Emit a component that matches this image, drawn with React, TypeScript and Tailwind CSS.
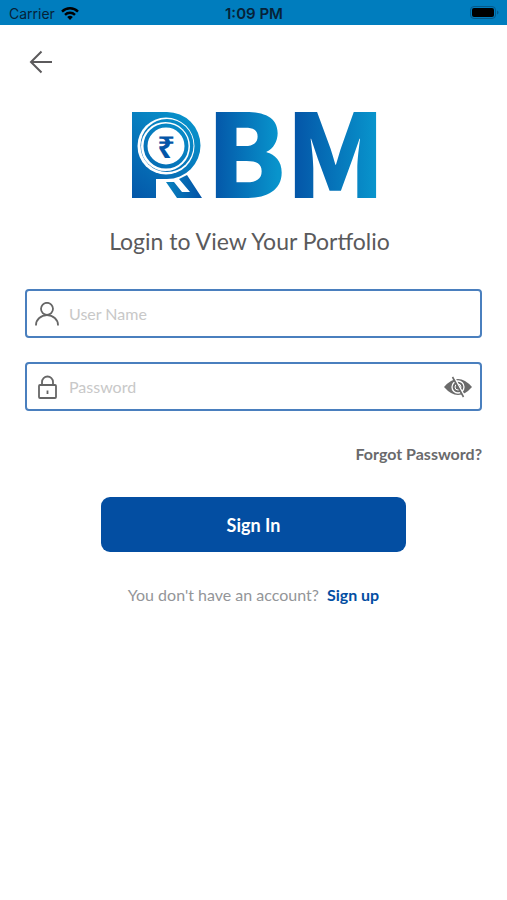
function StatusBar() {
  return (
    <header className="grid h-[25px] grid-cols-3 items-center bg-[#007dbe] pr-2 pl-[9px] font-['Inter','Liberation_Sans',sans-serif] text-[14px] leading-5 text-[#062238]">
      <div className="flex items-center gap-[6px] pt-[2px]">
        <span>Carrier</span>
        <svg viewBox="0 0 18 13" className="h-[13px] w-[18px]" fill="none" stroke="#000" strokeWidth="2.4" aria-hidden="true">
          <path d="M1 4.6a11.3 11.3 0 0 1 16 0" />
          <path d="M4 7.8a7.1 7.1 0 0 1 10 0" />
          <path d="M9 13 6.2 10.1a4 4 0 0 1 5.6 0z" fill="#000" stroke="none" />
        </svg>
      </div>
      <span className="pt-[2px] text-center text-[15px] font-semibold">1:09 PM</span>
      <svg viewBox="0 0 29 13" className="h-[13px] w-[29px] justify-self-end" aria-hidden="true">
        <rect x="0.5" y="0.5" width="25" height="12" rx="3.5" fill="none" stroke="#04598a" />
        <rect x="2" y="2" width="22" height="9" rx="2" fill="#000" />
        <path d="M27 4.5v4q1.5-.5 1.5-2t-1.5-2z" fill="#04598a" />
      </svg>
    </header>
  );
}

function Logo() {
  return (
    <svg viewBox="0 0 246 88" className="h-[88px] w-[246px] overflow-visible" role="img" aria-label="RBM">
      <defs>
        <linearGradient id="mark" x1="0" y1="88" x2="60" y2="10" gradientUnits="userSpaceOnUse">
          <stop offset="0" stopColor="#0456a8" />
          <stop offset="1" stopColor="#0891ca" />
        </linearGradient>
        <linearGradient id="leg" x1="36" y1="0" x2="68" y2="0" gradientUnits="userSpaceOnUse">
          <stop offset="0" stopColor="#0880be" />
          <stop offset="1" stopColor="#0456a8" />
        </linearGradient>
        <linearGradient id="letter" x1="0" y1="0" x2="1" y2="0">
          <stop offset="0.1" stopColor="#0456a8" />
          <stop offset="0.9" stopColor="#0894cc" />
        </linearGradient>
      </defs>
      <path d="M1 1h35a33 33 0 0 1 0 67H25v19H1z" fill="url(#mark)" />
      <circle cx="35" cy="35" r="28.5" fill="#fff" />
      <circle cx="36" cy="34.5" r="26.5" fill="url(#mark)" />
      <circle cx="34.5" cy="35.5" r="24.5" fill="#fff" />
      <circle cx="35" cy="35" r="20.5" fill="none" stroke="url(#mark)" strokeWidth="4" />
      <path d="M35 71h8l8 10h8L48 68l8-4 15 23H46z" fill="url(#leg)" />
      <text x="35" y="47" textAnchor="middle" fontSize="31" fill="#0456a8" className="font-['Noto_Sans',sans-serif] font-bold">₹</text>
      <g fill="url(#letter)" fontSize="115" className="font-['Noto_Sans_CJK_SC',sans-serif] font-black">
        <text x="75" y="87">B</text>
        <text x="154" y="87">M</text>
      </g>
    </svg>
  );
}

function UserIcon() {
  return (
    <svg viewBox="0 0 24 24" className="size-6 shrink-0" fill="none" stroke="#666" strokeWidth="1.8" aria-hidden="true">
      <circle cx="12" cy="6.8" r="6" />
      <path d="M1 23.5v-.5c0-5.5 5-9.8 11-9.8s11 4.3 11 9.8v.5" />
    </svg>
  );
}

function LockIcon() {
  return (
    <svg viewBox="0 0 24 24" className="size-6 shrink-0" fill="none" stroke="#666" strokeWidth="1.8" aria-hidden="true">
      <rect x="4" y="10" width="17" height="13" rx="1" />
      <path d="M7 10V7a5.5 5.5 0 0 1 11 0v3M12.5 15.5v3.5" />
    </svg>
  );
}

function EyeOffIcon() {
  return (
    <svg viewBox="0 0 28 22" className="h-[22px] w-7" aria-hidden="true">
      <path d="M0 11Q14-5 28 11 14 27 0 11z" fill="#6b6b6b" />
      <circle cx="14" cy="11" r="6" fill="none" stroke="#fff" strokeWidth="1.3" />
      <circle cx="14" cy="11" r="3" fill="none" stroke="#fff" />
      <path d="m10 1 11 20" stroke="#fff" strokeWidth="1.6" />
      <path d="m8.5 1 11 20" stroke="#6b6b6b" strokeWidth="1.6" />
    </svg>
  );
}

const field = "flex h-[49px] items-center gap-[10px] rounded-[4px] border-2 border-[#4a7fbe] px-2";
const input = "min-w-0 flex-1 bg-transparent text-[16px] leading-6 text-[#555] outline-none placeholder:text-[#c8c8c8]";

export default function App() {
  return (
    <div className="min-h-screen bg-white font-['Lato',sans-serif]">
      <StatusBar />
      <main className="px-[25px] pt-[25px]">
        <button type="button" aria-label="Back" className="ml-1 block">
          <svg viewBox="0 0 24 24" className="size-6" fill="none" stroke="#5c5a5c" strokeWidth="2">
            <path d="M23 12H2.5M12.5 1.5 2 12l10.5 10.5" />
          </svg>
        </button>
        <div className="mt-[37px] flex justify-center">
          <Logo />
        </div>
        <h1 className="mt-[26px] pr-2 text-center text-[23px] leading-8 text-[#5a5a5c]">Login to View Your Portfolio</h1>
        <form onSubmit={(e) => e.preventDefault()}>
          <label className={`mt-8 ${field}`}>
            <UserIcon />
            <input type="text" aria-label="User Name" placeholder="User Name" className={input} />
          </label>
          <label className={`mt-6 ${field}`}>
            <LockIcon />
            <input type="password" aria-label="Password" placeholder="Password" className={input} />
            <button type="button" aria-label="Show password">
              <EyeOffIcon />
            </button>
          </label>
          <div className="mt-[31px] text-right text-[16px] leading-6 font-bold text-[#6a6a6c]">
            <a href="#forgot">Forgot Password?</a>
          </div>
          <button type="submit" className="mx-auto mt-[31px] block h-[55px] w-2/3 rounded-[9px] bg-[#034ea2] text-[18px] leading-6 font-bold text-white">
            Sign In
          </button>
        </form>
        <p className="mt-[31px] flex justify-center gap-2 text-[16px] leading-6 text-[#939598]">
          <span>You don't have an account?</span>
          <a href="#signup" className="font-bold text-[#034ea2]">Sign up</a>
        </p>
      </main>
    </div>
  );
}
